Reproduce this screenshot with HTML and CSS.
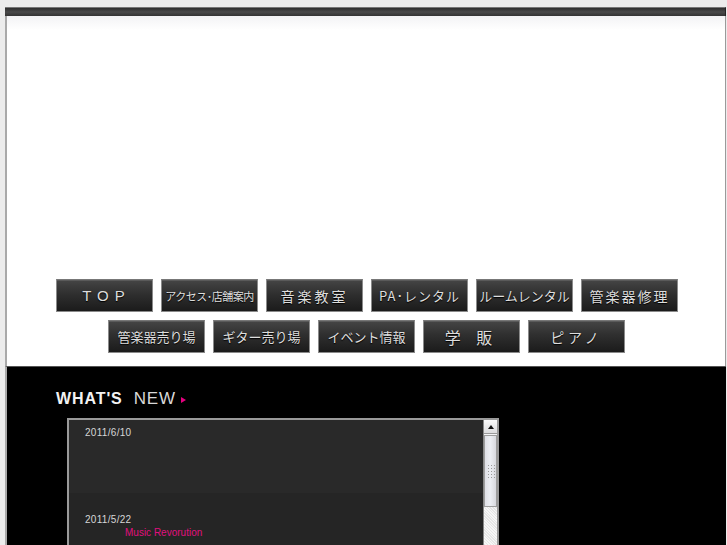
FILE: index.html
```html
<!DOCTYPE html>
<html lang="ja">
<head>
<meta charset="utf-8">
<title>Music Shop</title>
<link rel="stylesheet" href="styles.css">
</head>
<body>
<div class="page">
  <div class="topbar"></div>
  <div class="panel">
    <div class="hero"></div>
    <nav class="nav">
      <div class="nav-row row-1">
        <a class="btn btn-top">TOP</a>
        <a class="btn btn-small">アクセス･店舗案内</a>
        <a class="btn btn-wide">音楽教室</a>
        <a class="btn btn-pa">PA･レンタル</a>
        <a class="btn btn-mid">ルームレンタル</a>
        <a class="btn btn-wide2">管楽器修理</a>
      </div>
      <div class="nav-row row-2">
        <a class="btn btn-mid">管楽器売り場</a>
        <a class="btn btn-mid">ギター売り場</a>
        <a class="btn btn-mid">イベント情報</a>
        <a class="btn btn-gaku">学 販</a>
        <a class="btn btn-piano">ピアノ</a>
      </div>
    </nav>
  </div>
  <div class="dark">
    <h2 class="news-title"><b>WHAT'S</b> <span>NEW</span><i class="tri"></i></h2>
    <div class="news-box">
      <div class="news-list">
        <div class="entry entry-a">
          <div class="date">2011/6/10</div>
        </div>
        <div class="entry entry-b">
          <div class="date">2011/5/22</div>
          <a class="link">Music Revorution</a>
        </div>
      </div>
      <div class="scrollbar">
        <div class="sb-up"><i></i></div>
        <div class="sb-thumb"><span class="grip"></span></div>
        <div class="sb-track"></div>
      </div>
    </div>
  </div>
</div>
</body>
</html>
```
FILE: styles.css
```css
html, body {
  margin: 0;
  padding: 0;
}
body {
  background: #ececec;
  font-family: "Liberation Sans", Arial, "Noto Sans CJK JP", sans-serif;
  overflow: hidden;
  height: 545px;
}
.page {
  margin-left: 5px;
  padding-top: 7px;
  width: 721px;
}
.topbar {
  height: 8px;
  background: linear-gradient(#2e2e2e, #4a4a4a 50%, #333 100%);
  border-top: 1px solid #777;
  border-right: 1px solid #222;
}
.panel {
  background: linear-gradient(#f3f3f5, #ffffff 14px);
  border-left: 2px solid #a9a9a9;
  border-right: 1px solid #9a9a9a;
  height: 350px;
  display: flex;
  flex-direction: column;
}
.hero {
  height: 263px;
}
.nav {
  display: flex;
  flex-direction: column;
  gap: 8px;
  align-items: center;
}
.nav-row {
  display: flex;
  gap: 8px;
}
.row-1 {
  margin-left: 2px;
}
.row-2 {
  margin-left: 1px;
}
.btn {
  width: 95px;
  height: 31px;
  box-sizing: content-box;
  border: 1px solid #8a8a8a;
  border-top-color: #777;
  background: linear-gradient(#454545 0%, #2f2f2f 45%, #1b1b1b 100%);
  box-shadow: inset 0 1px 0 #5a5a5a;
  color: #dedede;
  display: flex;
  align-items: center;
  justify-content: center;
  font-family: "Noto Sans CJK JP", sans-serif;
  font-size: 13px;
  text-decoration: none;
  white-space: nowrap;
  text-shadow: 0 1px 1px #000;
}
.btn-top {
  font-family: "Liberation Sans", Arial, sans-serif;
  font-size: 15px;
  letter-spacing: 6px;
  padding-left: 4px;
  width: 91px;
}
.btn-small {
  font-size: 11px;
  letter-spacing: -0.5px;
}
.btn-wide {
  font-size: 14px;
  letter-spacing: 3px;
}
.btn-wide2 {
  font-size: 14px;
  letter-spacing: 2px;
}
.btn-pa {
  font-size: 13px;
  letter-spacing: 1px;
}
.btn-mid {
  font-size: 13px;
  letter-spacing: 0;
}
.btn-gaku {
  font-size: 16px;
  letter-spacing: 6px;
}
.btn-piano {
  font-size: 14px;
  letter-spacing: 4px;
}
.dark {
  background: #000;
  border-top: 1px solid #555;
  border-left: 2px solid #a9a9a9;
  height: 200px;
  padding-top: 21px;
}
.news-title {
  margin: 0 0 8px 49px;
  font-size: 16px;
  font-weight: normal;
  color: #e8e8e8;
  display: flex;
  align-items: center;
  height: 22px;
}
.news-title b {
  font-weight: bold;
  color: #f2f2f2;
  letter-spacing: 0.9px;
}
.news-title span {
  margin-left: 11px;
  font-size: 17px;
  color: #d8d8d8;
  letter-spacing: 0.8px;
}
.tri {
  display: inline-block;
  width: 0;
  height: 0;
  border-left: 5px solid #e4007f;
  border-top: 3px solid transparent;
  border-bottom: 3px solid transparent;
  margin-left: 5px;
  margin-top: 1px;
}
.news-box {
  margin-left: 60px;
  width: 428px;
  height: 140px;
  border: 2px solid #9a9a9a;
  background: #272727;
  display: flex;
}
.news-list {
  flex: 1;
}
.entry {
  padding: 7px 0 0 16px;
}
.entry-a {
  height: 66px;
  background: #292929;
}
.entry-b {
  background: #252525;
  padding-top: 21px;
  height: 60px;
}
.date {
  font-size: 10px;
  color: #d6d6d6;
  line-height: 12px;
  letter-spacing: 0.3px;
}
.link {
  display: block;
  margin-left: 40px;
  font-size: 10px;
  line-height: 12px;
  margin-top: 1px;
  color: #e0107f;
}
.scrollbar {
  width: 13px;
  border-left: 1px solid #888;
  display: flex;
  flex-direction: column;
  background: #f4f4f6;
}
.sb-up {
  height: 13px;
  background: linear-gradient(#fafafa, #dcdcde);
  border-bottom: 1px solid #999;
  display: flex;
  align-items: center;
  justify-content: center;
}
.sb-up i {
  width: 0;
  height: 0;
  border-left: 3px solid transparent;
  border-right: 3px solid transparent;
  border-bottom: 4px solid #111;
}
.sb-thumb {
  height: 70px;
  background: linear-gradient(90deg, #dfe0e6, #eceef3 50%, #d9dadf);
  border: 1px solid #9d9d9d;
  margin-top: 1px;
  display: flex;
  align-items: center;
  justify-content: center;
}
.grip {
  width: 8px;
  height: 15px;
  background-image: radial-gradient(circle, #999 0.8px, transparent 1px);
  background-size: 3px 3px;
}
.sb-track {
  flex: 1;
  background: repeating-linear-gradient(45deg, #f7f7f7 0 1px, #e6e6e6 1px 2px);
}
```
